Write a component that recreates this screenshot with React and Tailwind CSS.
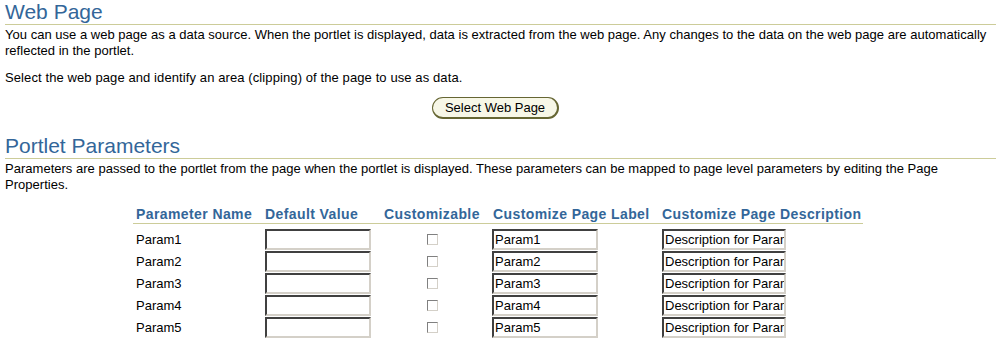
import React from "react";

const rows = ["Param1", "Param2", "Param3", "Param4", "Param5"];

function Field({ value, w }) {
  return (
    <div
      className={`${w} h-[21px] border-2 border-t-[#404040] border-l-[#404040] border-b-[#d4d0c8] border-r-[#d4d0c8] bg-white overflow-hidden whitespace-nowrap text-[13px] leading-[17px] pl-[1px] text-black`}
    >
      {value}
    </div>
  );
}

export default function App() {
  return (
    <div
      className="w-[998px] h-[342px] bg-white text-black pl-[5px] pr-[2px] overflow-hidden"
      style={{ fontFamily: '"Liberation Sans", Arial, sans-serif' }}
    >
      <h1 className="text-[21px] leading-[24px] text-[#336699] border-b border-[#cccc99] h-[25px]">
        Web Page
      </h1>
      <p className="text-[13px] leading-[16px] tracking-[0.02px] mt-[2px]">
        You can use a web page as a data source. When the portlet is displayed, data is extracted from the web page. Any changes to the data on the web page are automatically reflected in the portlet.
      </p>
      <p className="text-[13px] leading-[16px] tracking-[0.1px] mt-[11px]">
        Select the web page and identify an area (clipping) of the page to use as data.
      </p>
      <div className="flex justify-center mt-[11px] pr-[10px]">
        <div className="w-[127px] h-[22px] rounded-full bg-[#f7f7e7] border border-[#666633] border-r-2 border-b-2 flex items-center justify-center text-[13px]">
          Select Web Page
        </div>
      </div>
      <h2 className="text-[21px] leading-[24px] text-[#336699] border-b border-[#cccc99] mt-[15px] h-[25px]">
        Portlet Parameters
      </h2>
      <p className="text-[13px] leading-[16px] tracking-[0.02px] mt-[2px] pr-[50px]">
        Parameters are passed to the portlet from the page when the portlet is displayed. These parameters can be mapped to page level parameters by editing the Page Properties.
      </p>
      <table className="ml-[128px] mt-[13px] border-collapse text-[13px]">
        <thead>
          <tr className="border-b border-[#cccc99] text-[#336699] text-[14px] font-bold text-left">
            <th className="w-[129px] pl-[3px] pb-[1px] leading-[16px] tracking-[0.4px] whitespace-nowrap">Parameter Name</th>
            <th className="w-[119px] pl-[3px] pb-[1px] leading-[16px] tracking-[0.4px] whitespace-nowrap">Default Value</th>
            <th className="w-[109px] pl-[3px] pb-[1px] leading-[16px] tracking-[0.4px] whitespace-nowrap">Customizable</th>
            <th className="w-[169px] pl-[3px] pb-[1px] leading-[16px] tracking-[0.4px] whitespace-nowrap">Customize Page Label</th>
            <th className="w-[204px] pl-[3px] pb-[1px] leading-[16px] tracking-[0.4px] whitespace-nowrap">Customize Page Description</th>
          </tr>
        </thead>
        <tbody>
          {rows.map((r, i) => (
            <tr key={r} className="h-[22px]">
              <td className={`pl-[3px] ${i === 0 ? "pt-[5px]" : "pt-[1px]"}`}>{r}</td>
              <td className={`pl-[3px] ${i === 0 ? "pt-[5px]" : "pt-[1px]"}`}>
                <Field value="" w="w-[106px]" />
              </td>
              <td className={`${i === 0 ? "pt-[5px]" : "pt-[1px]"}`}>
                <div className="flex justify-center pr-[6px]">
                  <div className="w-[11px] h-[11px] border border-t-[#808080] border-l-[#808080] border-b-[#d4d0c8] border-r-[#d4d0c8] bg-white" />
                </div>
              </td>
              <td className={`pl-[2px] ${i === 0 ? "pt-[5px]" : "pt-[1px]"}`}>
                <Field value={r} w="w-[106px]" />
              </td>
              <td className={`pl-[3px] ${i === 0 ? "pt-[5px]" : "pt-[1px]"}`}>
                <Field value="Description for Param" w="w-[124px]" />
              </td>
            </tr>
          ))}
        </tbody>
      </table>
    </div>
  );
}
